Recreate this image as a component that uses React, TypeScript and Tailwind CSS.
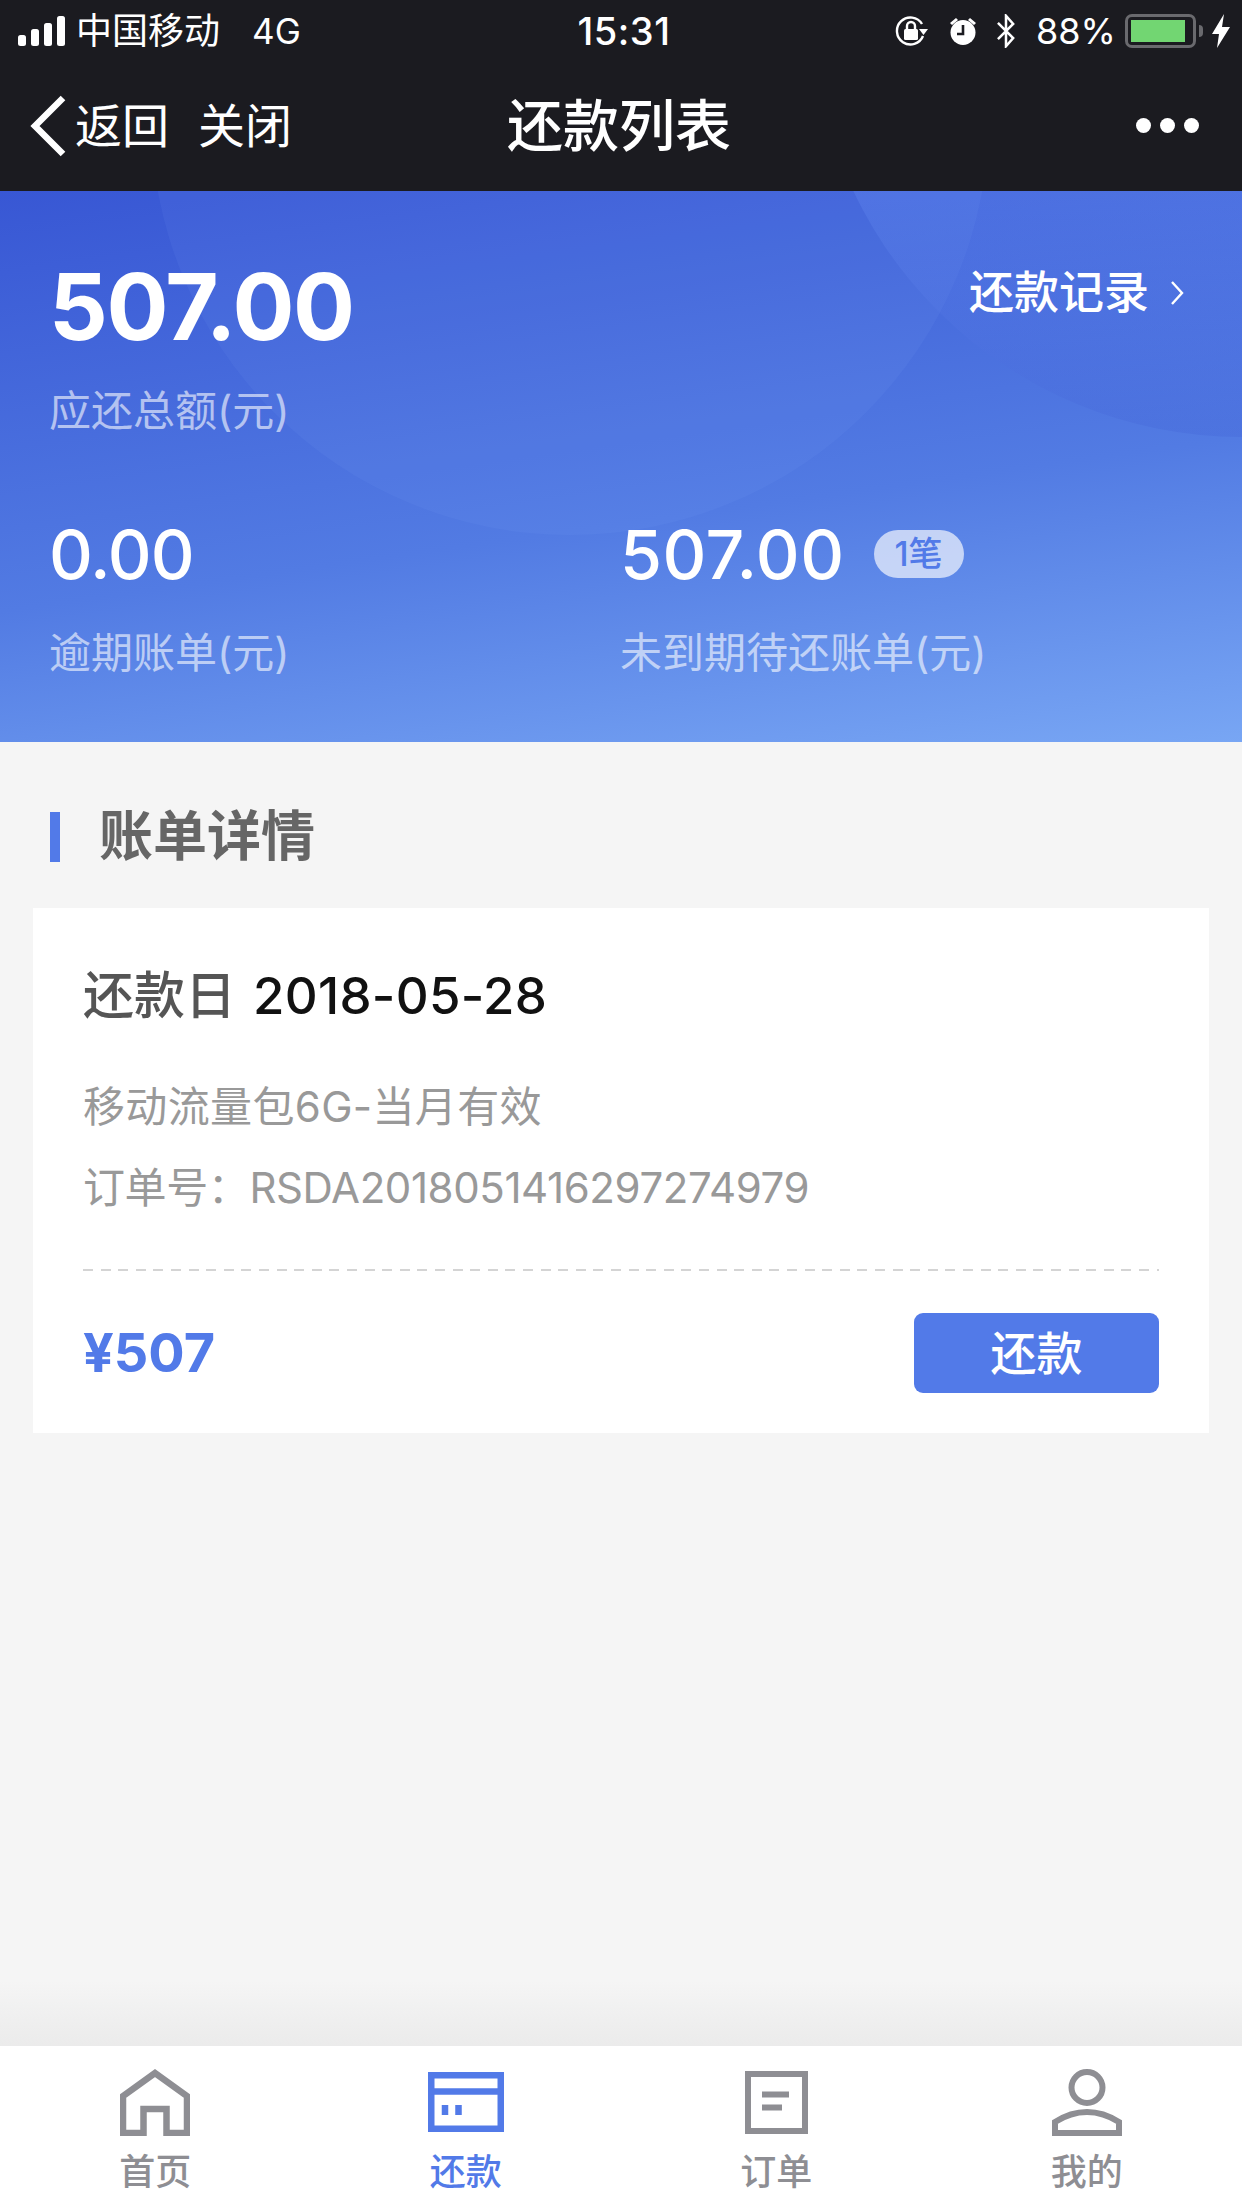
const CJK = "font-['Inter','Noto_Sans_CJK_SC',sans-serif]";

function StatusBar() {
  return (
    <div className="h-[60px] flex items-center justify-between pl-[18px] pr-[12px] pt-[2px] text-white">
      <div className="flex items-center w-[400px]">
        <svg width="48" height="30" viewBox="0 0 48 30" fill="#fff">
          <rect x="0" y="19" width="8" height="11" rx="2.5" />
          <rect x="13" y="13" width="8" height="17" rx="2.5" />
          <rect x="26" y="7" width="8" height="23" rx="2.5" />
          <rect x="39" y="0" width="8" height="30" rx="2.5" />
        </svg>
        <span className="ml-[10px] text-[36px] leading-none">中国移动</span>
        <span className="ml-[32px] text-[35px] leading-none">4G</span>
      </div>
      <span className="text-[38px] leading-none font-medium tracking-[0.5px]">15:31</span>
      <div className="flex items-center w-[400px] justify-end">
        <svg width="34" height="32" viewBox="0 0 34 32" fill="none" stroke="#fff" strokeWidth="2.4">
          <path d="M27 9A13.5 13.5 0 1 0 28 21" />
          <path d="M24 14h9l-4.5 6z" fill="#fff" stroke="none" />
          <rect x="9" y="14" width="14" height="11" rx="1.5" fill="#fff" stroke="none" />
          <path d="M12 14v-3a4 4 0 0 1 8 0v3" />
        </svg>
        <svg className="ml-[20px]" width="28" height="28" viewBox="0 0 28 28">
          <circle cx="14" cy="15.5" r="12.5" fill="#fff" />
          <path d="M14 8v9H8" stroke="#1b1b20" strokeWidth="2.6" fill="none" />
          <path d="M1 6l6-5 2 2-6 5zM27 6l-6-5-2 2 6 5z" fill="#fff" />
        </svg>
        <svg className="ml-[18px]" width="22" height="34" viewBox="0 0 22 38" fill="none" stroke="#fff" strokeWidth="2.8">
          <path d="M2 10l17 17-8 9V2l8 9L2 28" />
        </svg>
        <span className="ml-[19px] text-[36px] leading-none">88%</span>
        <div className="ml-[9px] w-[71px] h-[34px] rounded-[7px] border-[3px] border-[#6a6a6e] p-[3px]">
          <div className="h-full w-[54px] bg-[#72d672]" />
        </div>
        <div className="w-[4px] h-[12px] ml-[3px] rounded-r-full bg-[#6a6a6e]" />
        <svg className="ml-[9px]" width="18" height="34" viewBox="0 0 18 34" fill="#fff">
          <path d="M12 0L0 20h7L5 34 18 13h-8z" />
        </svg>
      </div>
    </div>
  );
}

function NavBar() {
  return (
    <div className="h-[131px] relative flex items-center justify-between text-white">
      <div className="flex items-center pl-[30px]">
        <svg width="36" height="62" viewBox="0 0 36 62" fill="none" stroke="#fff" strokeWidth="6.5">
          <path d="M33 3L5 31l28 28" />
        </svg>
        <span className="ml-[9px] text-[47px] leading-none">返回</span>
        <span className="ml-[29px] text-[47px] leading-none">关闭</span>
      </div>
      <span className="absolute left-0 right-0 text-center pr-[4px] text-[56px] leading-none font-medium">还款列表</span>
      <div className="flex gap-[9px] pr-[43px]">
        <span className="w-[15px] h-[15px] rounded-full bg-white" />
        <span className="w-[15px] h-[15px] rounded-full bg-white" />
        <span className="w-[15px] h-[15px] rounded-full bg-white" />
      </div>
    </div>
  );
}

function Summary() {
  return (
    <div className="relative h-[551px] overflow-hidden bg-[linear-gradient(172deg,#3857d4_0%,#527be3_58%,#78a6f4_100%)]">
      {/* background circles */}
      <div className="absolute left-[151px] top-[-494px] w-[838px] h-[838px] rounded-full bg-[rgba(140,175,255,0.08)]" />
      <div className="absolute left-[812px] top-[-614px] w-[860px] h-[860px] rounded-full bg-[linear-gradient(180deg,rgba(120,160,255,0.2)_72%,rgba(60,90,210,0.22)_100%)]" />
      <div className="relative pl-[49px] pr-[50px]">
        <div className="flex justify-between items-start">
          <div>
            <div className="mt-[66px] text-[92px] leading-[100px] font-bold text-white tracking-[-1.4px]">507.00</div>
            <div className="mt-[29px] text-[42px] leading-[50px] text-white/60">应还总额(元)</div>
          </div>
          <div className="flex items-center mt-[77px] mr-[8px] text-white">
            <span className="text-[45px] leading-[50px] font-medium">还款记录</span>
            <svg className="ml-[21px]" width="14" height="26" viewBox="0 0 14 26" fill="none" stroke="#fff" strokeWidth="2.4">
              <path d="M2 2l10 11L2 24" />
            </svg>
          </div>
        </div>
        <div className="grid grid-cols-[571px_1fr] mt-[80px]">
          <div>
            <div className="text-[68px] leading-[76px] font-medium text-white tracking-[-1px]">0.00</div>
            <div className="mt-[36px] text-[42px] leading-[50px] text-white/60">逾期账单(元)</div>
          </div>
          <div>
            <div className="flex items-center">
              <span className="text-[68px] leading-[76px] font-medium text-white tracking-[0.5px]">507.00</span>
              <span className="ml-[29px] w-[90px] h-[48px] rounded-full bg-white/65 text-[#527ae8] text-[34px] leading-[48px] text-center font-medium">1笔</span>
            </div>
            <div className="mt-[36px] text-[42px] leading-[50px] text-white/60">未到期待还账单(元)</div>
          </div>
        </div>
      </div>
    </div>
  );
}

function BillCard() {
  return (
    <div className="mx-[33px] mt-[35px] h-[525px] bg-white px-[50px]">
      <div className="pt-[58px] flex items-center leading-[60px]">
        <span className="text-[51px] font-medium text-[#555]">还款日</span>
        <span className="ml-[17px] text-[51px] font-medium text-[#111] tracking-[0.3px]">2018-05-28</span>
      </div>
      <div className="mt-[56px] text-[42px] leading-[50px] text-[#999] tracking-[0.35px]">移动流量包6G-当月有效</div>
      <div className="mt-[31px] text-[42px] leading-[50px] text-[#999] tracking-[-0.4px]">订单号：RSDA2018051416297274979</div>
      <div className="mt-[56px] h-[2px] bg-[repeating-linear-gradient(90deg,#d4d4d4_0,#d4d4d4_10px,transparent_10px,transparent_17.6px)]" />
      <div className="mt-[42px] flex items-center justify-between">
        <span className="text-[54px] leading-[80px] font-bold text-[#527ae8]">¥507</span>
        <button className="w-[245px] h-[80px] rounded-[9px] bg-[#527ae8] text-white text-[46px] leading-none font-medium">还款</button>
      </div>
    </div>
  );
}

const tabs = [
  {
    label: '首页',
    icon: (
      <svg width="70" height="67" viewBox="0 0 70 67" fill="none" stroke="#8e8e93" strokeWidth="6.5">
        <path d="M3 64V27L35 4l32 23v37H46.5V40h-23v24z" />
      </svg>
    ),
  },
  {
    label: '还款',
    active: true,
    icon: (
      <svg width="76" height="60" viewBox="0 0 76 60" fill="none" stroke="#527ae8" strokeWidth="6.5">
        <rect x="3.25" y="3.25" width="69.5" height="53.5" />
        <path d="M3 19.5h70" />
        <path d="M17 33v10M30.5 33v10" />
      </svg>
    ),
  },
  {
    label: '订单',
    icon: (
      <svg width="63" height="63" viewBox="0 0 63 63" fill="none" stroke="#8e8e93" strokeWidth="6">
        <rect x="3" y="3" width="57" height="57" />
        <path d="M17 23.5h27M17 36.5h20" />
      </svg>
    ),
  },
  {
    label: '我的',
    icon: (
      <svg width="70" height="67" viewBox="0 0 70 67" fill="none" stroke="#8e8e93" strokeWidth="6">
        <circle cx="35" cy="18.5" r="15.5" />
        <path d="M3 64V53C14 46 24 43 35 43s21 3 32 10v11z" />
      </svg>
    ),
  },
];

function TabBar() {
  return (
    <div className="h-[162px] bg-white grid grid-cols-4">
      {tabs.map((tab) => (
        <div key={tab.label} className="flex flex-col items-center">
          <div className="h-[68px] mt-[22px] flex items-center">{tab.icon}</div>
          <span className={`mt-[16px] text-[36px] leading-[40px] font-medium ${tab.active ? 'text-[#527ae8]' : 'text-[#8e8e93]'}`}>
            {tab.label}
          </span>
        </div>
      ))}
    </div>
  );
}

export default function App() {
  return (
    <div className={`w-[1242px] h-[2208px] flex flex-col bg-[#f5f5f5] ${CJK}`}>
      <div className="bg-[#1b1b20]">
        <StatusBar />
        <NavBar />
      </div>
      <Summary />
      <div className="flex-1 bg-[linear-gradient(180deg,#f5f5f5_0%,#f5f5f5_95%,#ebebeb_100%)]">
        <div className="flex items-center pl-[50px] pt-[59px]">
          <span className="w-[10px] h-[50px] bg-[#527ae8]" />
          <span className="ml-[39px] text-[54px] leading-[72px] font-semibold text-[#666]">账单详情</span>
        </div>
        <BillCard />
      </div>
      <TabBar />
    </div>
  );
}
